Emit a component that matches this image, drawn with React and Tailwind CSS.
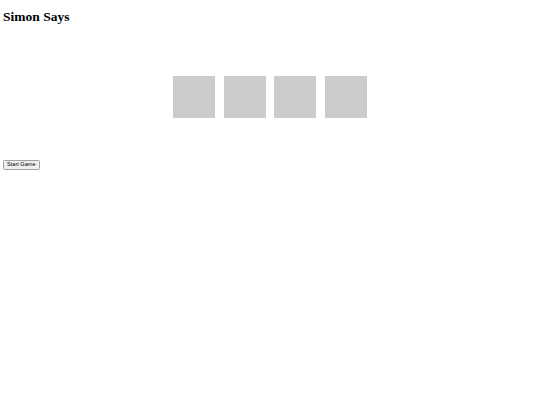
export default function App() {
  const pads = [0, 1, 2, 3];

  return (
    <div className="min-h-[405px] bg-white px-[3px] pt-[9px]" style={{ fontFamily: "'Liberation Serif', serif" }}>
      <h1 className="text-[13.5px] font-bold leading-[16px] text-black" style={{ fontFamily: "'Liberation Serif', serif" }}>
        Simon Says
      </h1>

      {/* Board */}
      <div className="mt-[51px] flex justify-center gap-[8.7px]">
        {pads.map((p) => (
          <div key={p} className="h-[42px] w-[42px] bg-[#cccccc]"></div>
        ))}
      </div>

      <div className="mt-[42px]">
        <button
          className="flex h-[9.5px] items-center rounded-[1.5px] border border-[#a0a0a0] bg-[#efefef] px-[3px] text-[5.6px] leading-none text-black"
          style={{ fontFamily: "'Liberation Sans', sans-serif" }}
        >
          Start Game
        </button>
      </div>
    </div>
  );
}
